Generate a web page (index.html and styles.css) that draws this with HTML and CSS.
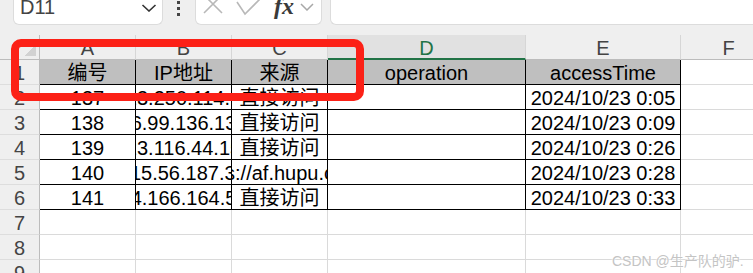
FILE: index.html
```html
<!DOCTYPE html>
<html lang="zh">
<head>
    <meta charset="UTF-8">
    <title>access log</title>
    <link rel="stylesheet" href="styles.css">
</head>
<body>
<div class="app">
    <div class="toolbar">
        <div class="namebox">
            <span class="name">D11</span>
            <svg class="chev" width="16" height="8" viewBox="0 0 16 8"><polyline points="1.5,1 8,7 14.5,1" fill="none" stroke="#333" stroke-width="1.6"/></svg>
        </div>
        <div class="dots"><i></i><i></i><i></i></div>
        <div class="fxbox">
            <svg class="icon-x" width="20" height="20" viewBox="0 0 20 20"><path d="M1 1 L19 19 M19 1 L1 19" stroke="#b8b8b8" stroke-width="1.6" fill="none"/></svg>
            <svg class="icon-ok" width="28" height="20" viewBox="0 0 28 20"><polyline points="1,6 9,18 26,1" fill="none" stroke="#b8b8b8" stroke-width="1.6"/></svg>
            <span class="fx">fx</span>
            <svg class="chev-small" width="14" height="8" viewBox="0 0 14 8"><polyline points="1,1 7,7 13,1" fill="none" stroke="#a8a8a8" stroke-width="1.5"/></svg>
        </div>
        <div class="formula"></div>
    </div>

    <div class="sheet">
        <!-- column letters -->
        <div class="corner"></div>
        <div class="colhead">A</div>
        <div class="colhead">B</div>
        <div class="colhead">C</div>
        <div class="colhead active">D</div>
        <div class="colhead">E</div>
        <div class="colhead">F</div>

        <div class="rowhead">1</div>
        <div class="cell bd hd">编号</div>
        <div class="cell bd hd">IP地址</div>
        <div class="cell bd hd">来源</div>
        <div class="cell bd hd">operation</div>
        <div class="cell bd hd">accessTime</div>
        <div class="cell"></div>

        <div class="rowhead">2</div>
        <div class="cell bd">137</div>
        <div class="cell bd"><span>123.250.114.13</span></div>
        <div class="cell bd">直接访问</div>
        <div class="cell bd"></div>
        <div class="cell bd">2024/10/23 0:05</div>
        <div class="cell"></div>

        <div class="rowhead">3</div>
        <div class="cell bd">138</div>
        <div class="cell bd"><span>36.99.136.130</span></div>
        <div class="cell bd">直接访问</div>
        <div class="cell bd"></div>
        <div class="cell bd">2024/10/23 0:09</div>
        <div class="cell"></div>

        <div class="rowhead">4</div>
        <div class="cell bd">139</div>
        <div class="cell bd"><span>223.116.44.156</span></div>
        <div class="cell bd">直接访问</div>
        <div class="cell bd"></div>
        <div class="cell bd">2024/10/23 0:26</div>
        <div class="cell"></div>

        <div class="rowhead">5</div>
        <div class="cell bd">140</div>
        <div class="cell bd"><span>115.56.187.35</span></div>
        <div class="cell bd"><span>https://af.hupu.com/</span></div>
        <div class="cell bd"></div>
        <div class="cell bd">2024/10/23 0:28</div>
        <div class="cell"></div>

        <div class="rowhead">6</div>
        <div class="cell bd">141</div>
        <div class="cell bd"><span>14.166.164.55</span></div>
        <div class="cell bd">直接访问</div>
        <div class="cell bd"></div>
        <div class="cell bd">2024/10/23 0:33</div>
        <div class="cell"></div>

        <div class="rowhead">7</div>
        <div class="cell"></div><div class="cell"></div><div class="cell"></div>
        <div class="cell"></div><div class="cell"></div><div class="cell"></div>

        <div class="rowhead">8</div>
        <div class="cell"></div><div class="cell"></div><div class="cell"></div>
        <div class="cell"></div><div class="cell"></div><div class="cell"></div>

        <div class="rowhead">9</div>
        <div class="cell"></div><div class="cell"></div><div class="cell"></div>
        <div class="cell"></div><div class="cell"></div><div class="cell"></div>
    </div>

    <!-- annotation drawn over the header -->
    <div class="mark"></div>
    <div class="watermark">CSDN @生产队的驴.</div>
</div>
</body>
</html>
```
FILE: styles.css
```css
body {
    margin: 0;
    background-color: #fff;
    font-family: "Liberation Sans", "Noto Sans CJK SC", sans-serif;
}

.app {
    position: relative;
    width: 753px;
    height: 273px;
    overflow: hidden;
}

/* formula bar */
.toolbar {
    display: flex;
    align-items: flex-start;
    height: 35px;
    background-color: #efefef;
}

.namebox {
    display: flex;
    align-items: flex-start;
    box-sizing: border-box;
    width: 150px;
    height: 25px;
    margin-left: 13px;
    padding-left: 6px;
    background-color: #fff;
    border: 1px solid #dcdcdc;
    border-top: none;
    border-radius: 0 0 6px 6px;
}

.name {
    font-size: 20px;
    line-height: 20px;
    margin-top: -3px;
    color: #444;
}

.chev {
    margin-left: auto;
    margin-right: 5px;
    margin-top: 4px;
}

.dots {
    display: flex;
    flex-direction: column;
    gap: 3px;
    margin-left: 14px;
    margin-top: 1px;
}

.dots i {
    display: block;
    width: 3px;
    height: 3px;
    background-color: #444;
}

.fxbox {
    display: flex;
    align-items: flex-start;
    box-sizing: border-box;
    width: 127px;
    height: 25px;
    margin-left: 15px;
    padding-left: 7px;
    background-color: #fff;
    border: 1px solid #dcdcdc;
    border-top: none;
    border-radius: 0 0 6px 6px;
}

.icon-x {
    margin-top: -6px;
}

.icon-ok {
    margin-left: 13px;
    margin-top: -4px;
}

.fx {
    margin-left: 10px;
    margin-top: -4px;
    font-family: "Liberation Serif", serif;
    font-style: italic;
    font-weight: bold;
    font-size: 24px;
    line-height: 20px;
    color: #3a3a3a;
}

.chev-small {
    margin-left: 6px;
    margin-top: 3px;
}

.formula {
    flex: 1;
    height: 25px;
    margin-left: 8px;
    box-sizing: border-box;
    background-color: #fff;
    border-left: 1px solid #dcdcdc;
    border-bottom: 1px solid #dcdcdc;
    border-radius: 0 0 0 6px;
}

/* grid */
.sheet {
    display: grid;
    grid-template-columns: 40px 96px 96px 96px 198px 155px 96px;
    grid-auto-rows: 25px;
    font-size: 20px;
}

.sheet > div {
    box-sizing: border-box;
    display: flex;
    justify-content: center;
    overflow: hidden;
    white-space: nowrap;
    line-height: 26px;
}

.corner {
    background: #efefef linear-gradient(to top left, #d2d2d2 50%, transparent 50%) no-repeat;
    background-size: 12px 12px;
    background-position: right 3px bottom 3px;
    border-right: 1px solid #bcbcbc;
    border-bottom: 1px solid #bcbcbc;
}

.colhead {
    background-color: #efefef;
    color: #444;
    border-right: 1px solid #d6d6d6;
    border-bottom: 1px solid #bcbcbc;
}

.colhead.active {
    background-color: #e1e1e1;
    color: #217346;
    border-bottom: 2px solid #217346;
}

.rowhead {
    background-color: #efefef;
    color: #444;
    border-right: 1px solid #bcbcbc;
    border-bottom: 1px solid #dddddd;
}

.cell {
    color: #000;
    border-right: 1px solid #dadada;
    border-bottom: 1px solid #dadada;
}

.cell.bd {
    border-right-color: #000;
    border-bottom-color: #000;
}

.cell.hd {
    background-color: #bfbfbf;
}

/* red annotation box */
.mark {
    position: absolute;
    left: 11px;
    top: 39px;
    width: 353px;
    height: 62px;
    box-sizing: border-box;
    border: 8px solid #fc2117;
    border-radius: 10px;
}

.watermark {
    position: absolute;
    left: 612px;
    top: 250px;
    white-space: nowrap;
    font-size: 14px;
    color: #c4c4c4;
    text-shadow: 0 0 2px #fff, 0 0 2px #fff;
}
```
